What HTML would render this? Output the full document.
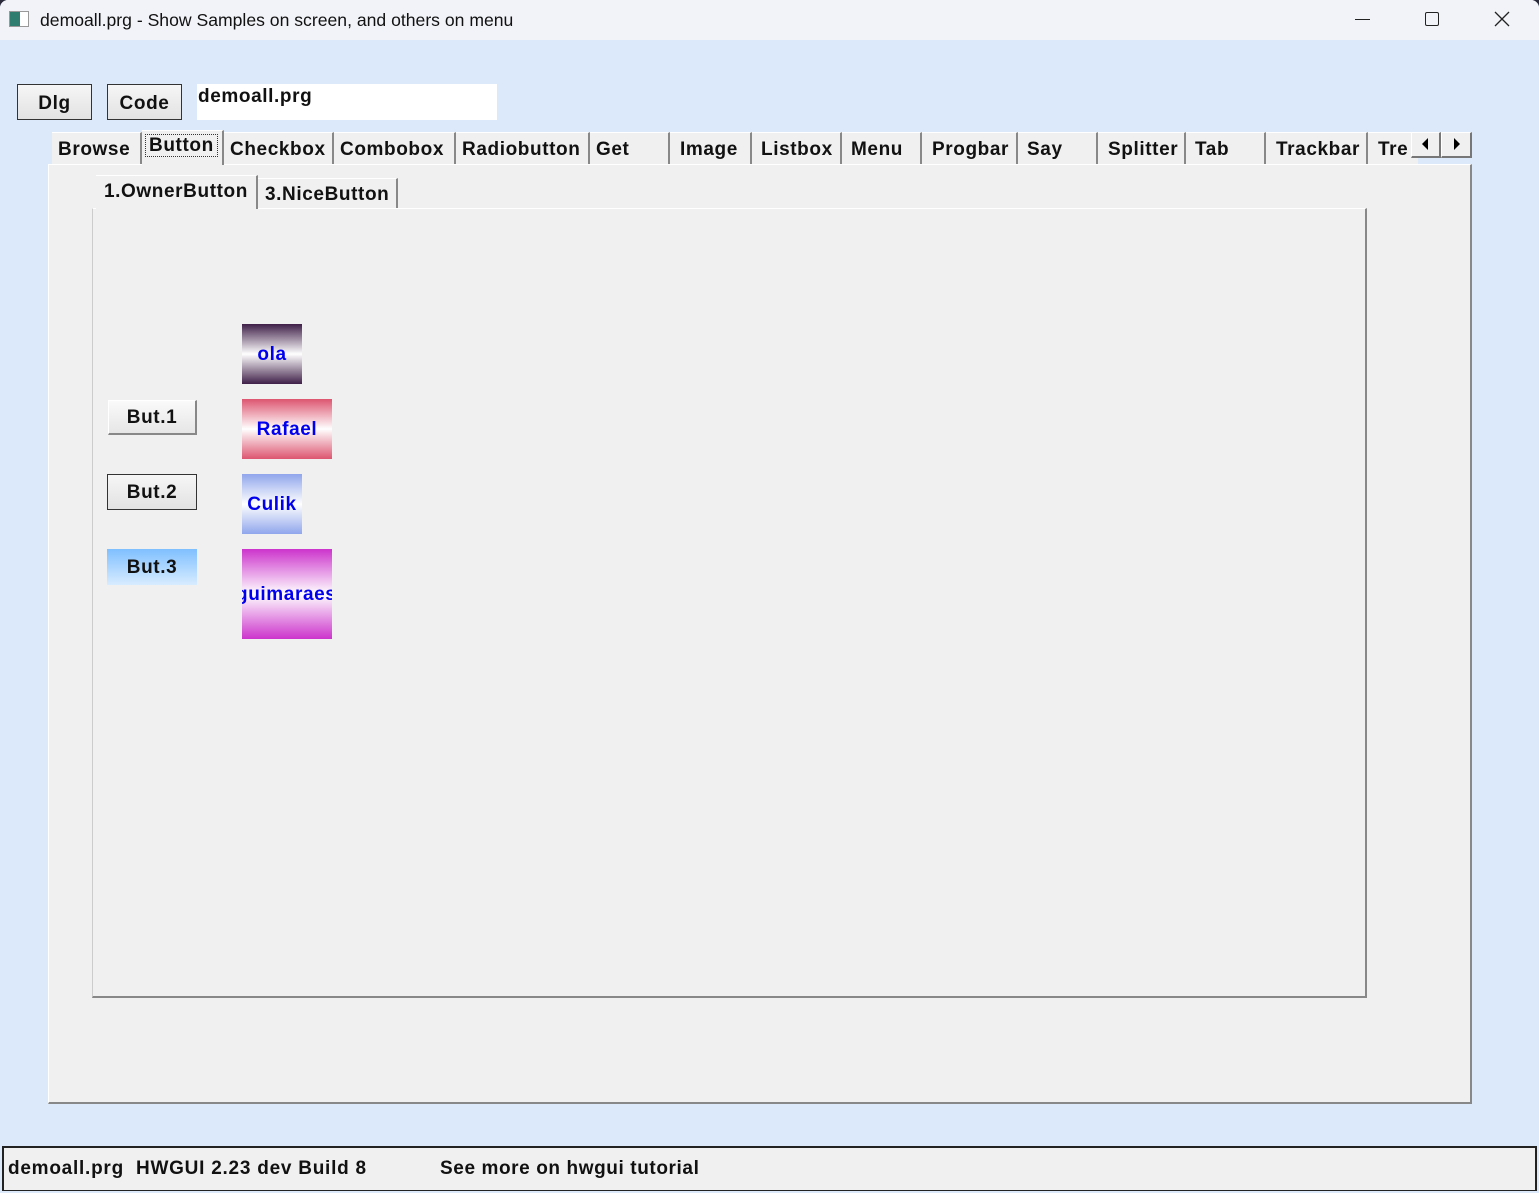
<!DOCTYPE html>
<html><head><meta charset="utf-8"><style>
*{margin:0;padding:0;box-sizing:border-box}
body{width:1539px;height:1193px;overflow:hidden;background:#2a2a3a;font-family:"Liberation Sans",sans-serif;position:relative}
.a{position:absolute}
.b{font-weight:bold;font-size:19px;color:#111;white-space:nowrap;letter-spacing:0.6px}
.tab{position:absolute;top:132px;height:32px;border-top:1px solid #fff;border-right:2px solid #888;padding:6px 0 0 6px;background:#f0f0f0}
.btn{position:absolute;border:1px solid #333;background:linear-gradient(#f6f6f6,#e2e2e2);text-align:center}
.nb{position:absolute;text-align:center;color:#0000ee;font-weight:bold;font-size:19px;overflow:hidden;white-space:nowrap;letter-spacing:0.6px}
</style></head><body>
<div class="a" style="left:0;top:0;width:1539px;height:1193px;background:#dce9fb;border-radius:8px 8px 0 0"></div>
<div class="a" style="left:0;top:0;width:1539px;height:40px;background:#f2f3f8;border-radius:8px 8px 0 0"></div>
<div class="a" style="left:9px;top:11px;width:20px;height:16px;border:1px solid #999;background:linear-gradient(90deg,#2e7d6e 0 55%,#fff 55%)"></div>
<div class="a" style="left:40px;top:10px;font-size:17.6px;color:#111">demoall.prg - Show Samples on screen, and others on menu</div>
<div class="a" style="left:1355px;top:19px;width:15px;height:1px;background:#222"></div>
<div class="a" style="left:1425px;top:12px;width:14px;height:14px;border:1px solid #222;border-radius:2px"></div>
<svg class="a" style="left:1494px;top:11px" width="16" height="16"><path d="M1 1L15 15M15 1L1 15" stroke="#222" stroke-width="1.3"/></svg>

<div class="btn b" style="left:17px;top:84px;width:75px;height:36px;padding-top:8px">Dlg</div>
<div class="btn b" style="left:107px;top:84px;width:75px;height:36px;padding-top:8px">Code</div>
<div class="a b" style="left:197px;top:84px;width:300px;height:36px;background:#fff;padding:2px 0 0 1px">demoall.prg</div>

<div class="a" style="left:48px;top:164px;width:1424px;height:940px;background:#f0f0f0;border-top:1px solid #fff;border-left:1px solid #fff;border-right:2px solid #888;border-bottom:2px solid #888"></div>
<div class="tab b" style="left:52px;width:90px">Browse</div>
<div class="tab b" style="left:142px;top:130px;width:82px;height:35px;padding:4px 0 0 3px"><span style="border:1px dotted #333;padding:0 3px">Button</span></div>
<div class="tab b" style="left:224px;width:110px">Checkbox</div>
<div class="tab b" style="left:334px;width:122px">Combobox</div>
<div class="tab b" style="left:456px;width:134px">Radiobutton</div>
<div class="tab b" style="left:590px;width:80px">Get</div>
<div class="tab b" style="left:670px;width:82px;padding-left:10px">Image</div>
<div class="tab b" style="left:752px;width:90px;padding-left:9px">Listbox</div>
<div class="tab b" style="left:842px;width:80px;padding-left:9px">Menu</div>
<div class="tab b" style="left:922px;width:96px;padding-left:10px">Progbar</div>
<div class="tab b" style="left:1018px;width:80px;padding-left:9px">Say</div>
<div class="tab b" style="left:1098px;width:88px;padding-left:10px">Splitter</div>
<div class="tab b" style="left:1186px;width:80px;padding-left:9px">Tab</div>
<div class="tab b" style="left:1266px;width:102px;padding-left:10px">Trackbar</div>
<div class="tab b" style="left:1368px;width:50px;padding-left:10px;overflow:hidden;border-right:none">Tre</div>
<div class="a" style="left:1411px;top:132px;width:30px;height:26px;background:#f0f0f0;border:1px solid #fff;border-right:2px solid #777;border-bottom:2px solid #777"><svg width="26" height="22"><path d="M16 5L10 11L16 17Z" fill="#000"/></svg></div>
<div class="a" style="left:1441px;top:132px;width:31px;height:26px;background:#f0f0f0;border:1px solid #fff;border-right:2px solid #777;border-bottom:2px solid #777"><svg width="26" height="22"><path d="M12 5L18 11L12 17Z" fill="#000"/></svg></div>

<div class="a" style="left:92px;top:208px;width:1275px;height:790px;border-top:1px solid #fff;border-left:1px solid #ccc;border-right:2px solid #888;border-bottom:2px solid #888"></div>
<div class="a b" style="left:96px;top:175px;width:162px;height:34px;background:#f0f0f0;border-top:1px solid #fff;border-right:2px solid #888;padding:5px 0 0 8px">1.OwnerButton</div>
<div class="a b" style="left:258px;top:178px;width:140px;height:30px;border-top:1px solid #fff;border-right:2px solid #888;padding:5px 0 0 7px">3.NiceButton</div>

<div class="nb" style="left:242px;top:324px;width:60px;height:60px;background:linear-gradient(#3f1f48,#fff 50%,#3f1f48);padding-top:20px">ola</div>
<div class="nb" style="left:242px;top:399px;width:90px;height:60px;background:linear-gradient(#dd5570,#fff 50%,#dd5570);padding-top:20px">Rafael</div>
<div class="nb" style="left:242px;top:474px;width:60px;height:60px;background:linear-gradient(#90a6ec,#fff 50%,#90a6ec);padding-top:20px">Culik</div>
<div class="nb" style="left:242px;top:549px;width:90px;height:90px;background:linear-gradient(#cc33cc,#fff 50%,#cc33cc);padding-top:35px"><span style="position:absolute;left:-6px;top:35px">guimaraes</span></div>

<div class="a b" style="left:108px;top:400px;width:89px;height:35px;background:linear-gradient(#fafafa,#e6e6e6);border-top:1px solid #fff;border-left:1px solid #fff;border-right:2px solid #888;border-bottom:2px solid #888;text-align:center;padding-top:6px">But.1</div>
<div class="btn b" style="left:107px;top:474px;width:90px;height:36px;padding-top:7px">But.2</div>
<div class="a b" style="left:107px;top:549px;width:90px;height:36px;background:linear-gradient(#7fbfff,#d8ecff);text-align:center;padding-top:8px">But.3</div>

<div class="a" style="left:2px;top:1146px;width:1535px;height:45px;background:#f0f0f0;border:2px solid #222;border-bottom-width:1px"></div>
<div class="a b" style="left:8px;top:1158px;letter-spacing:0.75px">demoall.prg&nbsp; HWGUI 2.23 dev Build 8</div>
<div class="a b" style="left:440px;top:1158px;letter-spacing:0.6px">See more on hwgui tutorial</div>
</body></html>
